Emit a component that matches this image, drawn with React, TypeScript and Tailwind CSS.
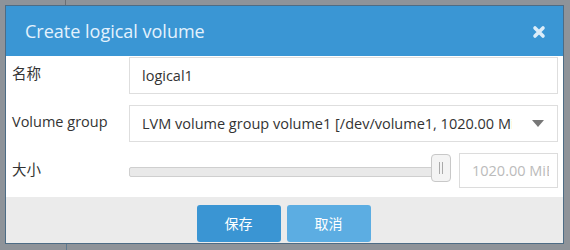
import React from "react";

export default function App() {
  const font = { fontFamily: '"Open Sans", "Noto Sans CJK SC", sans-serif' };
  return (
    <div
      className="relative w-[570px] h-[250px] bg-[#8e9399] pl-[5px] pt-[5px] overflow-hidden"
      style={font}
    >
      <div className="absolute left-[65px] top-0 w-[1px] h-[5px] bg-[#6b6f74]" />
      <div className="absolute left-[66px] bottom-0 w-[1px] h-[7px] bg-[#5f7a90]" />
      <div className="relative w-[559px] h-[239px] bg-white border border-[#4d6c85] flex flex-col">
        <div className="h-[50px] bg-[#3a96d4] flex items-center justify-between pl-[19px] pr-[17px] shrink-0">
          <span className="text-[18px] text-[#e3f2fd] leading-none -mt-[1px]">Create logical volume</span>
          <svg width="14" height="14" viewBox="0 0 14 14" className="mt-[2px]">
            <path d="M3 3 L11 11 M11 3 L3 11" stroke="#dcedf9" strokeWidth="3.6" strokeLinecap="round" />
          </svg>
        </div>
        <div className="flex flex-col pt-[1px] pr-[5px] pb-[9px] gap-[11px] text-[14.5px] text-[#333]">
          <div className="flex h-[37px] items-center">
            <div className="w-[123px] pl-[6px] -mt-[4px]">名称</div>
            <div className="flex-1 h-full border border-[#dedede] flex items-center pl-[12px]">logical1</div>
          </div>
          <div className="flex h-[37px] items-center">
            <div className="w-[123px] pl-[6px] -mt-[4px]">Volume group</div>
            <div className="flex-1 h-full border border-[#dedede] flex items-center pl-[12px] pr-[10px] justify-between">
              <span className="whitespace-nowrap overflow-hidden w-[370px]">LVM volume group volume1 [/dev/volume1, 1020.00 MiB]</span>
              <svg width="12" height="7" viewBox="0 0 12 7" className="shrink-0 mr-[3px]">
                <path d="M0 0 L12 0 L6 7 Z" fill="#777" />
              </svg>
            </div>
          </div>
          <div className="flex h-[35px] items-center">
            <div className="w-[123px] pl-[6px] -mt-[2px]">大小</div>
            <div className="flex-1 flex items-center">
              <div className="relative flex-1 h-[36px] flex items-center">
                <div className="w-full h-[10px] bg-[#e9e9e9] border border-[#cfcfcf] rounded-[2px] mt-[3px]" />
                <div className="absolute right-[-2px] top-[1px] w-[20px] h-[28px] bg-[#f4f4f4] border border-[#c8c8c8] rounded-[4px] flex items-center justify-center gap-[2px]">
                  <div className="w-[1px] h-[12px] bg-[#aaa]" />
                  <div className="w-[1px] h-[12px] bg-[#aaa]" />
                </div>
              </div>
              <div className="ml-[10px] w-[99px] h-[35px] border border-[#dcdcdc] flex items-center pl-[12px] text-[#bbb]">
                <span className="block w-[77px] whitespace-nowrap overflow-hidden">1020.00 MiB</span>
              </div>
            </div>
          </div>
        </div>
        <div className="flex-1 bg-[#ebebeb] flex items-start justify-center gap-[6px] pt-[8px] pr-[2px]">
          <div className="w-[84px] h-[37px] rounded-[3px] bg-[#3a95d3] text-white text-[14px] flex items-center justify-center">保存</div>
          <div className="w-[84px] h-[37px] rounded-[3px] bg-[#5cade2] text-white text-[14px] flex items-center justify-center">取消</div>
        </div>
      </div>
    </div>
  );
}
